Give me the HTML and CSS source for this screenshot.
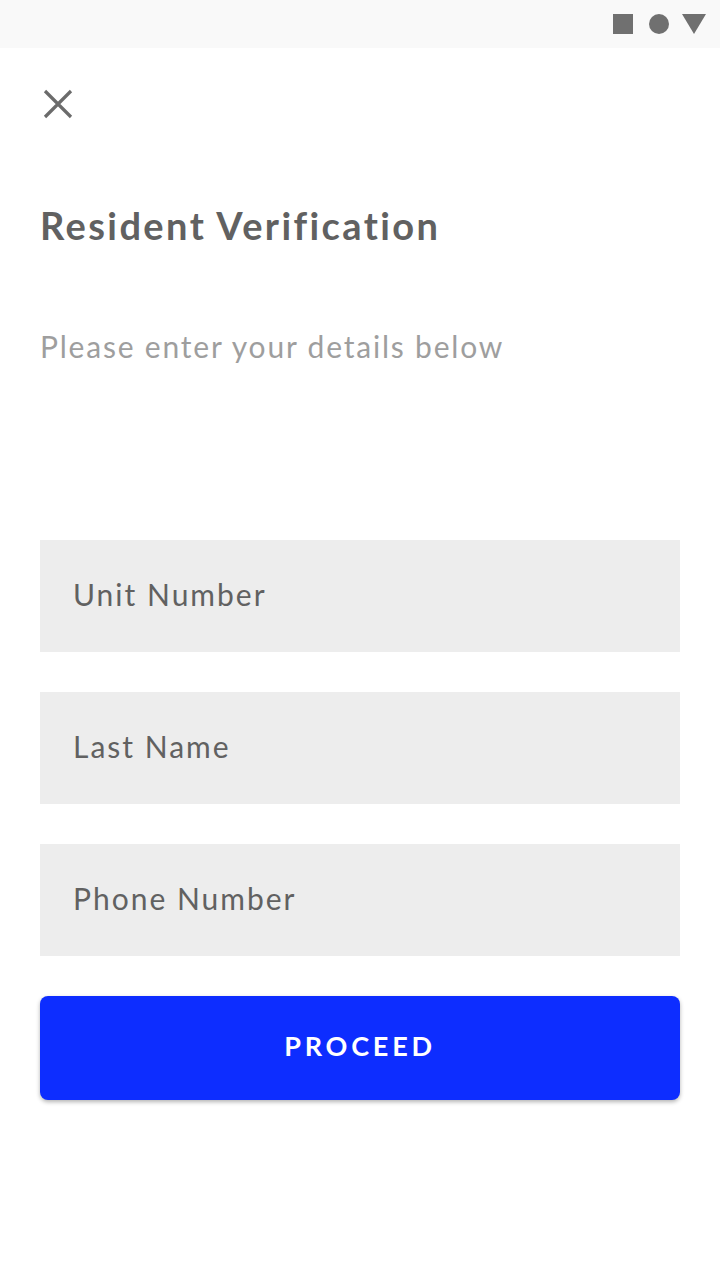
FILE: index.html
```html
<!DOCTYPE html>
<html>
<head>
<meta charset="utf-8">
<link rel="stylesheet" href="styles.css">
</head>
<body>
<div class="status">
  <span class="sq"></span>
  <span class="ci"></span>
  <svg class="tri" width="24" height="20" viewBox="0 0 24 20"><polygon points="0,0 24,0 12,20" fill="#707070"/></svg>
</div>
<main class="page">
  <button class="close" aria-label="close">
    <svg width="32" height="32" viewBox="0 0 32 32"><path d="M3 3 L29 29 M29 3 L3 29" stroke="#6b6b6b" stroke-width="3.2" fill="none"/></svg>
  </button>
  <h1 class="title">Resident Verification</h1>
  <p class="sub">Please enter your details below</p>
  <form class="form">
    <div class="field">Unit Number</div>
    <div class="field">Last Name</div>
    <div class="field">Phone Number</div>
    <button type="button" class="btn">PROCEED</button>
  </form>
</main>
</body>
</html>
```
FILE: styles.css
```css
* { box-sizing: border-box; }
html, body { margin: 0; padding: 0; background: #fff; }
body {
  font-family: Lato, "Noto Sans", sans-serif; width: 720px; height: 1280px; overflow: hidden;
  font-variant-ligatures: none;
}
.status {
  height: 48px; background: #f9f9f9;
  display: flex; align-items: center; justify-content: flex-end;
  padding-right: 14px;
}
.sq { width: 20px; height: 20px; background: #707070; display: block; margin-right: 16px; }
.ci { width: 20px; height: 20px; border-radius: 50%; background: #707070; display: block; margin-right: 13px; }
.tri { display: block; }
.page { padding: 0 40px; }
.close {
  margin: 40px 0 0 2px; padding: 0; border: 0; background: none;
  width: 32px; height: 32px; display: block;
}
.close svg { display: block; }
.title {
  margin: 82px 0 0 0; font-size: 38px; font-weight: 700; color: #616161;
  line-height: 46px; letter-spacing: 2.4px;
}
.sub {
  margin: 78px 0 0 0; font-size: 30px; font-weight: 400; color: #9e9e9e;
  line-height: 40px; letter-spacing: 1.8px;
}
.form { margin-top: 174px; display: flex; flex-direction: column; gap: 40px; }
.field {
  height: 112px; background: #ededed; color: #616161;
  font-size: 30px; letter-spacing: 2px;
  display: flex; align-items: center; padding: 0 0 5px 33px;
}
.btn {
  height: 104px; border: 0; border-radius: 8px; background: #0d2dff; color: #fff;
  font-family: Lato, "Noto Sans", sans-serif; font-weight: 700; font-size: 27px;
  letter-spacing: 3.8px; box-shadow: 0 2px 4px rgba(0,0,0,0.3); padding: 0 0 5px 0;
}
```
